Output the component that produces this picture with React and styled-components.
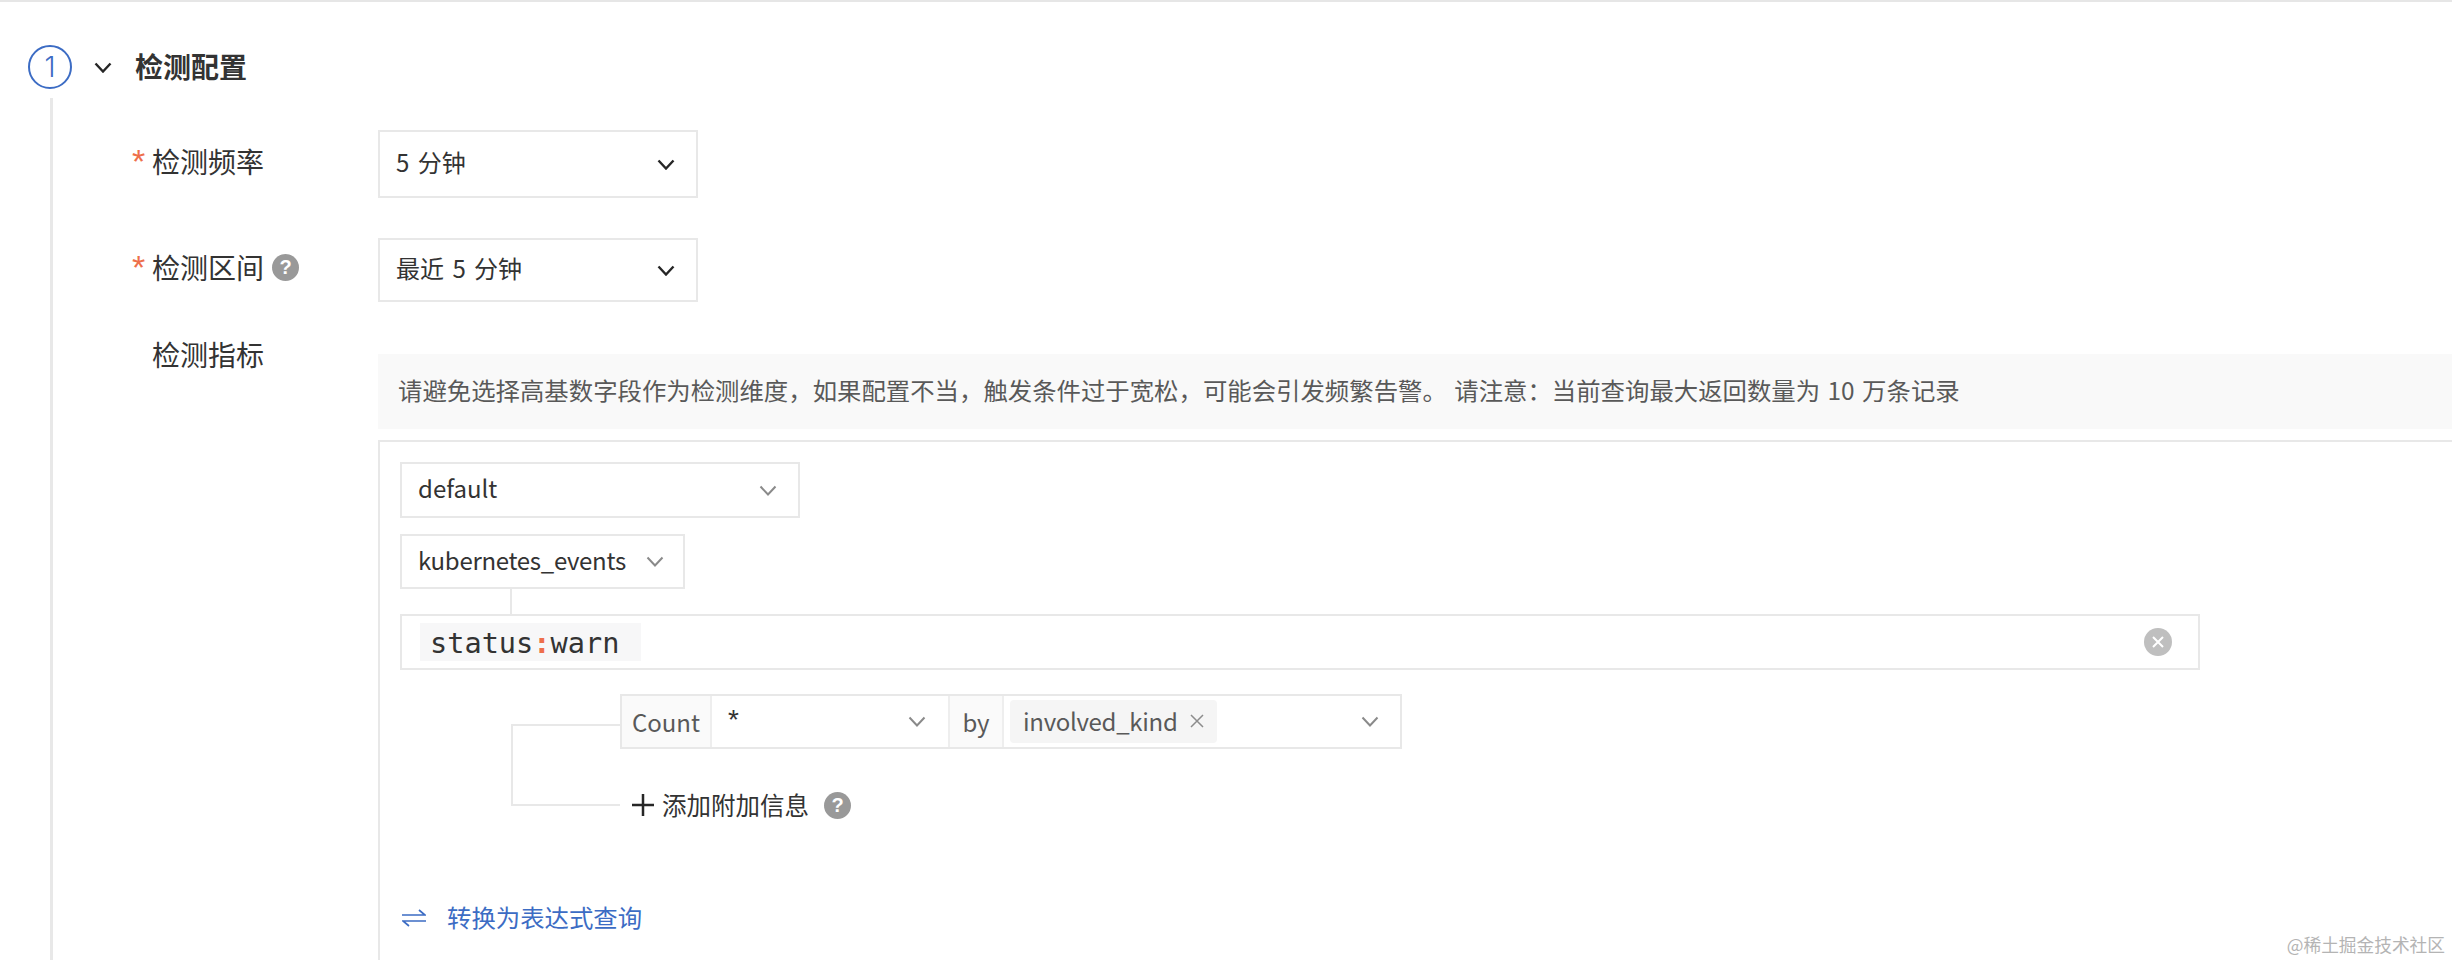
import React from 'react'
import styled, { createGlobalStyle } from 'styled-components'

const GlobalStyle = createGlobalStyle`
  html, body {
    margin: 0;
    padding: 0;
    background: #fff;
  }
  body {
    font-family: "Noto Sans CJK SC", "Noto Sans", sans-serif;
    color: #333;
  }
`

const LINE = '#e8e8e8'
const BLUE = '#3c6cc4'

const Page = styled.div`
  position: relative;
  width: 2452px;
  height: 960px;
  overflow: hidden;
  box-sizing: border-box;
  border-top: 2px solid #e6e6e6;
`
const SectionHeader = styled.div`
  display: flex;
  align-items: center;
  height: 44px;
  margin: 43px 0 9px 28px;
`
const StepCircle = styled.div`
  width: 44px;
  height: 44px;
  box-sizing: border-box;
  border: 2px solid ${BLUE};
  border-radius: 50%;
  display: flex;
  align-items: center;
  justify-content: center;
  color: ${BLUE};
  font-size: 28px;
  font-weight: 300;
  font-family: "Inter", sans-serif;
`
const ChevronSlot = styled.div`
  display: flex;
  margin-left: 22px;
`
const SectionTitle = styled.div`
  font-size: 28px;
  line-height: 34px;
  font-weight: 600;
  color: #333;
  margin: 0 0 3px 23px;
`
const SectionBody = styled.div`
  margin-left: 50px;
  height: 863px;
  box-sizing: border-box;
  border-left: 3px solid ${LINE};
  padding: 32px 0 0 80px;
`
const FormRow = styled.div`
  display: grid;
  grid-template-columns: 245px 1fr;
  align-items: ${p => (p.$top ? 'start' : 'center')};
  margin-top: ${p => p.$gap || 0}px;
`
const Label = styled.div`
  display: flex;
  align-items: center;
  font-size: 28px;
  line-height: 34px;
  color: #333;
  margin-left: 19px;
  padding-bottom: ${p => (p.$flat ? 0 : 6)}px;
  position: relative;
`
const Star = styled.span`
  position: absolute;
  left: -20px;
  top: 0;
  color: #ee6f4b;
  font-family: "Liberation Sans", sans-serif;
  font-size: 34px;
`
const HelpBadge = styled.span`
  display: inline-flex;
  align-items: center;
  justify-content: center;
  width: 27px;
  height: 27px;
  border-radius: 50%;
  background: #999;
  color: #fff;
  font-family: "Liberation Sans", sans-serif;
  font-size: 20px;
  font-weight: 700;
  margin-left: ${p => p.$gap || 8}px;
`
const Select = styled.div`
  display: flex;
  align-items: center;
  justify-content: space-between;
  box-sizing: border-box;
  width: ${p => p.$width}px;
  height: ${p => p.$height}px;
  border: 2px solid ${LINE};
  padding: 0 ${p => p.$right || 21}px 0 16px;
  font-size: 24px;
  word-spacing: 3px;
  letter-spacing: ${p => p.$tight || 0}px;
  color: #333;
  white-space: nowrap;
`
const SelectText = styled.span`
  padding-bottom: 5px;
`
const ChevronSvg = styled.svg`
  width: 18px;
  height: 11px;
  flex: none;
  fill: none;
  stroke: ${p => (p.$muted ? '#8a8a8a' : '#262626')};
  stroke-width: ${p => (p.$muted ? 2 : 2.4)};
`
const ControlColumn = styled.div`
  padding-top: ${p => p.$top || 0}px;
  min-width: 0;
`
const Notice = styled.div`
  height: 75px;
  box-sizing: border-box;
  display: flex;
  align-items: center;
  padding: 0 0 5px 20px;
  background: #f9f9f9;
  font-size: 24.4px;
  word-spacing: 2px;
  color: #595959;
  white-space: nowrap;
`
const QueryPanel = styled.div`
  margin-top: 11px;
  height: 600px;
  box-sizing: border-box;
  border: solid ${LINE};
  border-width: 2px 0 0 2px;
  padding: 20px 0 0 20px;
`
const StackGap = styled.div`
  height: 16px;
`
const Stem = styled.div`
  width: 2px;
  height: 25px;
  margin-left: 110px;
  background: ${LINE};
`
const QueryInput = styled.div`
  width: 1800px;
  height: 56px;
  box-sizing: border-box;
  border: 2px solid ${LINE};
  display: flex;
  align-items: center;
  justify-content: space-between;
  padding: 0 26px 0 18px;
`
const QueryToken = styled.div`
  display: flex;
  align-items: center;
  height: 38px;
  box-sizing: border-box;
  padding: 2px 22px 0 10px;
  background: #f7f7f8;
  font-family: "DejaVu Sans Mono", monospace;
  font-size: 28.6px;
  color: #333;
`
const Colon = styled.span`
  color: #ee6f4b;
  font-weight: 700;
`
const ClearButton = styled.span`
  display: flex;
  align-items: center;
  justify-content: center;
  width: 28px;
  height: 28px;
  border-radius: 50%;
  background: #bfbfbf;
`
const AggArea = styled.div`
  display: flex;
  align-items: flex-start;
  margin: 24px 0 0 111px;
`
const Branch = styled.div`
  width: 109px;
  height: 82px;
  margin-top: 30px;
  box-sizing: border-box;
  border: solid ${LINE};
  border-width: 2px 0 2px 2px;
  flex: none;
`
const AggColumn = styled.div`
  display: flex;
  flex-direction: column;
`
const AggRow = styled.div`
  display: flex;
  width: 782px;
  height: 55px;
  box-sizing: border-box;
  border: 2px solid ${LINE};
  font-size: 24px;
  color: #595959;
`
const AggLabel = styled.div`
  display: flex;
  align-items: center;
  justify-content: center;
  width: ${p => p.$width}px;
  background: #fafafa;
  border-right: 2px solid #eee;
  box-sizing: border-box;
`
const AggSelect = styled.div`
  flex: ${p => (p.$grow ? 1 : 'none')};
  width: ${p => p.$width}px;
  display: flex;
  align-items: center;
  justify-content: space-between;
  box-sizing: border-box;
  padding: 0 ${p => p.$right}px 0 ${p => p.$left}px;
  border-right: ${p => (p.$divider ? '2px solid #eee' : 'none')};
  color: #333;
`
const Wildcard = styled.span`
  font-family: "Liberation Sans", sans-serif;
  font-size: 28px;
  line-height: 28px;
  padding-bottom: 4px;
`
const Tag = styled.div`
  display: flex;
  align-items: center;
  height: 43px;
  box-sizing: border-box;
  padding: 0 13px 2px 13px;
  border-radius: 4px;
  background: #f5f5f5;
  color: #595959;
  letter-spacing: -0.3px;
`
const TagClose = styled.svg`
  width: 14px;
  height: 14px;
  margin-left: 13px;
  fill: none;
  stroke: #8c8c8c;
  stroke-width: 1.5;
`
const AddRow = styled.div`
  display: flex;
  align-items: center;
  height: 26px;
  margin: 43px 0 0 12px;
  font-size: 24.5px;
  color: #333;
`
const AddText = styled.span`
  padding-bottom: 2px;
`
const PlusIcon = styled.svg`
  width: 22px;
  height: 22px;
  margin-right: 8px;
  fill: none;
  stroke: #262626;
  stroke-width: 2.5;
`
const ConvertLink = styled.div`
  display: flex;
  align-items: center;
  margin: 82px 0 0 2px;
  font-size: 24.4px;
  line-height: 34px;
  color: ${BLUE};
`
const SwapIcon = styled.svg`
  width: 24px;
  height: 18px;
  margin: 2px 21px 0 0;
  fill: none;
  stroke: ${BLUE};
  stroke-width: 1.7;
`
const Watermark = styled.div`
  position: absolute;
  right: 7px;
  bottom: 6px;
  font-size: 17.7px;
  line-height: 20px;
  color: #b4b4b4;
`

const Chevron = ({ muted }) => (
  <ChevronSvg $muted={muted} viewBox="0 0 18 11">
    <path d="M1.5 1.5 L9 9.5 L16.5 1.5" />
  </ChevronSvg>
)

export default function App() {
  return (
    <Page>
      <GlobalStyle />
      <SectionHeader>
        <StepCircle>1</StepCircle>
        <ChevronSlot><Chevron /></ChevronSlot>
        <SectionTitle>检测配置</SectionTitle>
      </SectionHeader>
      <SectionBody>
        <FormRow>
          <Label><Star>*</Star>检测频率</Label>
          <Select $width={320} $height={68}><SelectText>5 分钟</SelectText><Chevron /></Select>
        </FormRow>
        <FormRow $gap={40}>
          <Label><Star>*</Star>检测区间<HelpBadge>?</HelpBadge></Label>
          <Select $width={320} $height={64}><SelectText>最近 5 分钟</SelectText><Chevron /></Select>
        </FormRow>
        <FormRow $gap={35} $top>
          <Label $flat>检测指标</Label>
          <ControlColumn $top={17}>
            <Notice>请避免选择高基数字段作为检测维度，如果配置不当，触发条件过于宽松，可能会引发频繁告警。 请注意：当前查询最大返回数量为 10 万条记录</Notice>
            <QueryPanel>
              <Select $width={400} $height={56}><SelectText>default</SelectText><Chevron muted /></Select>
              <StackGap />
              <Select $width={285} $height={55} $right={19} $tight={-0.3}><SelectText>kubernetes_events</SelectText><Chevron muted /></Select>
              <Stem />
              <QueryInput>
                <QueryToken>status<Colon>:</Colon>warn</QueryToken>
                <ClearButton>
                  <svg width="14" height="14" viewBox="0 0 14 14" fill="none" stroke="#fff" strokeWidth="2">
                    <path d="M2 2 L12 12 M12 2 L2 12" />
                  </svg>
                </ClearButton>
              </QueryInput>
              <AggArea>
                <Branch />
                <AggColumn>
                  <AggRow>
                    <AggLabel $width={90}>Count</AggLabel>
                    <AggSelect $width={238} $left={16} $right={22} $divider><Wildcard>*</Wildcard><Chevron muted /></AggSelect>
                    <AggLabel $width={54}>by</AggLabel>
                    <AggSelect $grow $left={6} $right={21}>
                      <Tag>
                        involved_kind
                        <TagClose viewBox="0 0 14 14"><path d="M1 1 L13 13 M13 1 L1 13" /></TagClose>
                      </Tag>
                      <Chevron muted />
                    </AggSelect>
                  </AggRow>
                  <AddRow>
                    <PlusIcon viewBox="0 0 22 22"><path d="M11 0 V22 M0 11 H22" /></PlusIcon>
                    <AddText>添加附加信息</AddText>
                    <HelpBadge $gap={15}>?</HelpBadge>
                  </AddRow>
                </AggColumn>
              </AggArea>
              <ConvertLink>
                <SwapIcon viewBox="0 0 24 18">
                  <path d="M0 6 H23 L17 1 M24 12 H1 L7 17" />
                </SwapIcon>
                转换为表达式查询
              </ConvertLink>
            </QueryPanel>
          </ControlColumn>
        </FormRow>
      </SectionBody>
      <Watermark>@稀土掘金技术社区</Watermark>
    </Page>
  )
}
